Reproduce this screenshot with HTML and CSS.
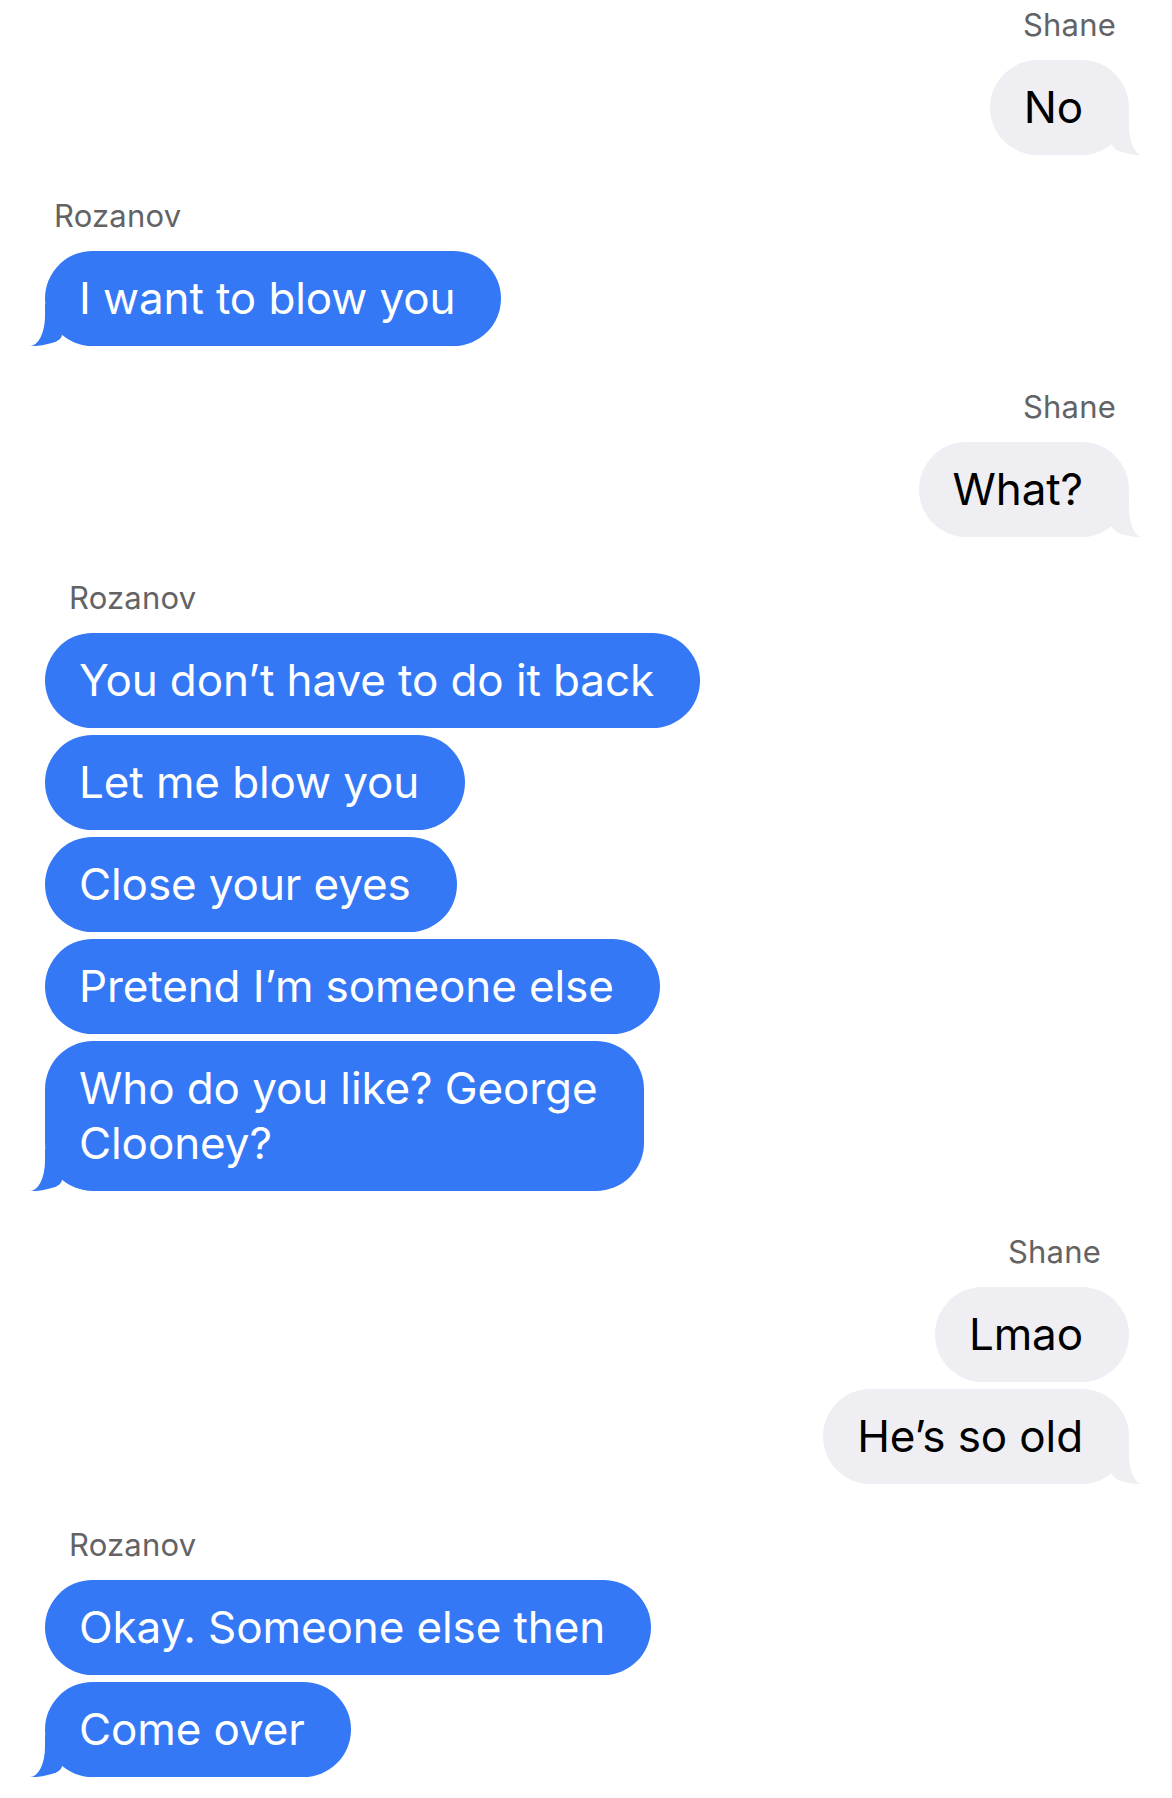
FILE: index.html
```html
<!DOCTYPE html>
<html lang="en">
<head>
  <meta charset="UTF-8" />
  <title>Messages</title>
  <link rel="stylesheet" href="styles.css">
</head>
<body>

  <div class="thread">

    <div class="group sent">
      <div class="sender">Shane</div>
      <div class="bubble tail">No</div>
    </div>

    <div class="group received first">
      <div class="sender">Rozanov</div>
      <div class="bubble tail">I want to blow you</div>
    </div>

    <div class="group sent">
      <div class="sender">Shane</div>
      <div class="bubble tail">What?</div>
    </div>

    <div class="group received">
      <div class="sender">Rozanov</div>
      <div class="bubble">You don’t have to do it back</div>
      <div class="bubble">Let me blow you</div>
      <div class="bubble">Close your eyes</div>
      <div class="bubble">Pretend I’m someone else</div>
      <div class="bubble tail">Who do you like? George<br>Clooney?</div>
    </div>

    <div class="group sent inset">
      <div class="sender">Shane</div>
      <div class="bubble">Lmao</div>
      <div class="bubble tail">He’s so old</div>
    </div>

    <div class="group received">
      <div class="sender">Rozanov</div>
      <div class="bubble">Okay. Someone else then</div>
      <div class="bubble tail">Come over</div>
    </div>

  </div>

</body>
</html>
```

FILE: styles.css
```css
body {
  margin: 0;
  background: #fff;
  font-family: Inter, 'Noto Sans', sans-serif;
}

.thread {
  display: flex;
  flex-direction: column;
  padding: 8px 0 20px;
}

.group {
  display: flex;
  flex-direction: column;
  gap: 7px;
  margin-top: 44px;
}

.group:first-child {
  margin-top: 0;
}

.sender {
  font-size: 31px;
  line-height: 34px;
  letter-spacing: 0.2px;
  color: #636366;
  margin-bottom: 11px;
}

/* bubbles */
.bubble {
  position: relative;
  font-size: 44px;
  line-height: 55px;
  padding: 20px 46px 20px 34px;
  border-radius: 48px;
  letter-spacing: -0.1px;
}

.received {
  align-items: flex-start;
  padding-left: 45px;
}

.received .sender {
  margin-left: 24px;
}

.received.first .sender {
  margin-left: 9px;
}

.received .bubble {
  background: #3478f6;
  color: #fff;
}

.sent {
  align-items: flex-end;
  padding-right: 43px;
}

.sent .sender {
  margin-right: 13px;
}

.sent.inset .sender {
  margin-right: 28px;
}

.sent .bubble {
  background: #efeff3;
  color: #000;
}

/* tails */
.bubble.tail::before,
.bubble.tail::after {
  content: "";
  position: absolute;
  bottom: 0;
  height: 42px;
}

.received .bubble.tail::before {
  left: -15px;
  width: 32px;
  background: #3478f6;
  border-bottom-right-radius: 32px 11px;
}

.received .bubble.tail::after {
  left: -40px;
  width: 40px;
  background: #fff;
  border-bottom-right-radius: 15px 30px;
}

.sent .bubble.tail::before {
  right: -13px;
  width: 30px;
  background: #efeff3;
  border-bottom-left-radius: 30px 11px;
}

.sent .bubble.tail::after {
  right: -40px;
  width: 40px;
  background: #fff;
  border-bottom-left-radius: 13px 30px;
}
```
